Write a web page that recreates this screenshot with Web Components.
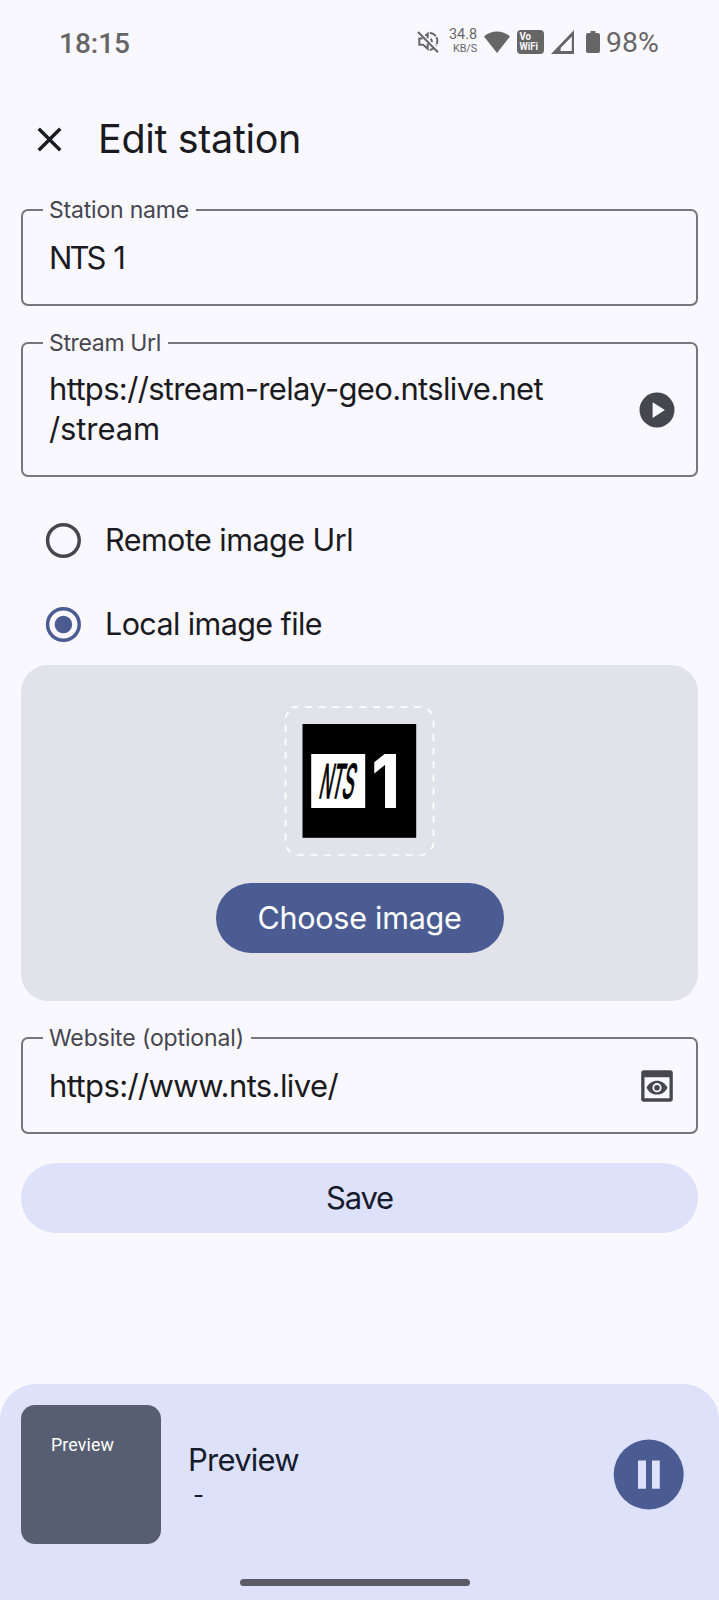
<!DOCTYPE html>
<html lang="en">
<head>
<meta charset="utf-8">
<title>Edit station</title>
<style>
html,body{margin:0;padding:0}
body{width:719px;height:1600px;overflow:hidden;background:#faf8ff;color:#1a1b21;font-family:Inter,Roboto,sans-serif}
</style>
</head>
<body>
<edit-station-page></edit-station-page>
<script>
const define = (name, html, extra) => customElements.define(name, class extends HTMLElement {
  constructor() {
    super();
    const t = document.createElement('template');
    t.innerHTML = html;
    this.attachShadow({ mode: 'open' }).appendChild(t.content.cloneNode(true));
  }
  connectedCallback() { if (extra) extra(this, this.shadowRoot); }
});

/* A single line of text whose tracking is adjusted to a given width. */
define('fit-text', `
<style>:host{display:block;white-space:nowrap;line-height:40px;flex:none}span{display:inline-block}</style>
<span><slot></slot></span>`, (el, root) => {
  const span = root.querySelector('span');
  el.style.fontSize = el.getAttribute('size') + 'px';
  const width = +el.getAttribute('width');
  span.style.letterSpacing = '0px';
  const natural = span.getBoundingClientRect().width;
  span.style.letterSpacing = ((width - natural) / el.textContent.length).toFixed(3) + 'px';
  el.style.width = width + 'px';
});

define('status-bar', `
<style>
:host{display:flex;height:84px;box-sizing:border-box;color:#666;font-family:Roboto,sans-serif;padding-left:59px;align-items:center}
.time{font-weight:500;margin-right:287px;padding-top:3px}
.rate{display:flex;flex-direction:column;align-items:flex-end;margin:0 7px 0 10px;width:28px}
.rate fit-text{line-height:14px}
svg{display:block;flex:none}
.pct{margin-left:6px;padding-top:2px}
</style>
<fit-text class="time" size="28" width="71">18:15</fit-text>
<svg width="22" height="22" viewBox="0 0 22 22" fill="none" stroke="#666" stroke-width="2">
<path d="M1 1 21 21.3"/><path d="M5.5 7.6H2.3v6.2h3.8l4.6 4V12.6M8.3 4.7l2.400-2.100v4.700"/><path d="M13.600 7.800c1 .8 1.500 2 1.300 3.300"/><path d="M12.800 1.800c5 .8 8 4.400 7.500 8.800-.1 1.700-.7 3-1.500 4M16.800 17c-1.200 1-2.400 1.700-4 2" stroke-dasharray="7 1.2"/></svg>
<div class="rate"><fit-text size="14.4" width="28">34.8</fit-text><fit-text size="10.8" width="24">KB/S</fit-text></div>
<svg width="26" height="22" viewBox="0 0 26 22"><path fill="#666" d="M0 5.4C7.5-1.2 18.5-1.2 26 5.4L13 22z"/></svg>
<svg style="margin-left:7px" width="27" height="24" viewBox="0 0 27 24"><rect width="27" height="24" rx="4" fill="#666"/>
<g fill="#faf8ff" font-family="Roboto" font-weight="700" font-size="10"><text x="2.5" y="10" textLength="11.5" lengthAdjust="spacingAndGlyphs">Vo</text><text x="2.5" y="20" textLength="18.5" lengthAdjust="spacingAndGlyphs">WiFi</text></g></svg>
<svg style="margin-left:7px" width="23" height="24" viewBox="0 0 23 24"><path fill="#666" fill-rule="evenodd" d="M23 0V24H0zM20.8 6.5 9.6 18v3h11.2z"/></svg>
<svg style="margin-left:12px" width="14" height="22" viewBox="0 0 14 22"><path fill="#666" d="M4.5 0h5v2H12a2 2 0 0 1 2 2v16a2 2 0 0 1-2 2H2a2 2 0 0 1-2-2V4a2 2 0 0 1 2-2h2.500z"/></svg>
<fit-text class="pct" size="28.4" width="53">98%</fit-text>`);

define('top-bar', `
<style>
:host{display:flex;height:109px;align-items:center;padding-left:29px}
svg{display:block;margin:1px 28px 0 0}
</style>
<svg width="41" height="41" viewBox="0 0 24 24"><path fill="#1a1b21" d="M19 6.410 17.590 5 12 10.590 6.410 5 5 6.410 10.590 12 5 17.590 6.410 19 12 13.410 17.590 19 19 17.590 13.410 12z"/></svg>
<slot></slot>`);

define('outlined-field', `
<style>
:host{display:block;position:relative;box-sizing:border-box;border:2px solid #777680;border-radius:7px}
.label{position:absolute;left:20px;top:-21px;padding:0 7px 0 6px;background:#faf8ff;color:#46464f;height:40px}
.row{display:flex;height:100%;align-items:center;justify-content:space-between;padding:0 18.500px 0 26px}
.value{display:flex;flex-direction:column}
</style>
<div class="label"><slot name="label"></slot></div>
<div class="row"><div class="value"><slot></slot></div><slot name="icon"></slot></div>`);

define('radio-option', `
<style>
:host{display:flex;height:84px;align-items:center;padding-left:45px}
svg{display:block;margin-right:23px}
:host(:not([checked])) .dot{display:none}
circle{stroke:#46464f}
:host([checked]) circle{stroke:#4b5c92}
.dot{fill:#4b5c92}
</style>
<svg width="37" height="37" viewBox="0 0 37 37"><circle cx="18.400" cy="18.500" r="15.800" fill="none" stroke-width="3.500"/><circle class="dot" cx="18.400" cy="18.500" r="8" stroke-width="1.500"/></svg>
<slot></slot>`);

define('pill-button', `
<style>
:host{display:flex;box-sizing:border-box;height:70px;border-radius:35px;align-items:center;justify-content:center;background:#dde1f9;color:#151b2c}
:host([primary]){background:#4b5c92;color:#fff;width:288px}
</style><slot></slot>`);

define('station-logo', `
<style>:host{display:block}svg{display:block}</style>
<svg width="151" height="151" viewBox="284.500 706 151 151">
<path d="M292 707.200H421a13 13 0 0 1 13 13V842a13 13 0 0 1-13 13H299a13 13 0 0 1-13-13V720a13 13 0 0 1 10-12.600" fill="none" stroke="#fff" stroke-width="1.700" stroke-dasharray="6.850 6.750"/>
<rect x="303" y="724" width="113.700" height="113.800"/>
<rect x="311.700" y="754" width="54" height="54" fill="#fff"/>
<text transform="translate(318.500 798) skewX(-12) scale(.46 1)" font-family="Liberation Sans" font-weight="400" stroke="#000" stroke-width="1.500" font-size="49" textLength="74" lengthAdjust="spacingAndGlyphs">NTS</text>
<text transform="translate(372 808) scale(.86 1)" font-family="Inter" font-weight="800" font-size="74" fill="#fff">1</text>
</svg>`);

define('image-picker', `
<style>:host{display:flex;box-sizing:border-box;height:336px;border-radius:27px;background:#e2e2eb;flex-direction:column;align-items:center;padding-top:41px;gap:26px}</style>
<station-logo></station-logo><slot></slot>`);

define('player-bar', `
<style>
:host{display:flex;flex-direction:column;box-sizing:border-box;height:216px;border-radius:36px 36px 0 0;background:#dde1f9;color:#151b2c;padding:21px 0 0 21px}
.row{display:flex;height:139px}
.tile{box-sizing:border-box;width:140px;height:139px;border-radius:14px;background:#585e71;color:#fff;font-family:Roboto,sans-serif;padding:20px 0 0 30px}
.meta{padding:35px 0 0 27px;width:425px;box-sizing:border-box}
.sub{line-height:29px;padding-left:5px}
svg{display:block;margin:34px 0 0 27px}
.home{width:230px;height:7px;border-radius:4px;background:#5b5c65;margin:35px 0 0 219px}
</style>
<div class="row">
<div class="tile"><fit-text size="17.8" width="63">Preview</fit-text></div>
<div class="meta"><fit-text size="31" width="111">Preview</fit-text><fit-text class="sub" size="24" width="11">-</fit-text></div>
<svg width="71" height="71" viewBox="0 0 71 71"><circle cx="35.700" cy="35.500" r="35" fill="#4b5c92"/><path fill="#dde1f9" d="M25 21.500h8v28.200h-8zM39 21.500h7.800v28.200H39z"/></svg>
</div>
<div class="home"></div>`);

define('edit-station-page', `
<style>
:host{display:flex;flex-direction:column;width:719px;height:1600px}
main{display:flex;flex-direction:column;padding:16px 21px 0;flex:1}
outlined-field{flex:none}
.name{height:97px}
.url{height:135px;margin-top:36px}
.radios{margin:21px 0 -1px -21px}
.site{height:97px;margin-top:36px}
.save{margin-top:29px}
.gap{word-spacing:4px}
.url>fit-text:not([slot]){margin-top:-1px;margin-bottom:1px}
svg{display:block}
</style>
<status-bar></status-bar>
<top-bar><fit-text size="39.5" width="203">Edit station</fit-text></top-bar>
<main>
<outlined-field class="name"><fit-text slot="label" size="23" width="140">Station name</fit-text><fit-text class="gap" size="31" width="74">NTS 1</fit-text></outlined-field>
<outlined-field class="url"><fit-text slot="label" size="23" width="112">Stream Url</fit-text>
<fit-text size="31" width="494">https://stream-relay-geo.ntslive.net</fit-text><fit-text size="31" width="111">/stream</fit-text>
<svg slot="icon" width="42" height="42" viewBox="0 0 24 24"><path fill="#46464f" fill-rule="evenodd" d="M12 2a10 10 0 1 0 0 20 10 10 0 0 0 0-20zM9.500 16.500v-9l7 4.500z"/></svg></outlined-field>
<div class="radios"><radio-option><fit-text size="30.5" width="248">Remote image Url</fit-text></radio-option><radio-option checked><fit-text size="30.5" width="217">Local image file</fit-text></radio-option></div>
<image-picker><pill-button primary><fit-text size="30.5" width="204">Choose image</fit-text></pill-button></image-picker>
<outlined-field class="site"><fit-text slot="label" size="23" width="195">Website (optional)</fit-text><fit-text size="31" width="289">https://www.nts.live/</fit-text>
<svg slot="icon" width="42" height="42" viewBox="0 0 42 42"><path fill="#46464f" fill-rule="evenodd" d="M8 5.200h26a2.800 2.800 0 0 1 2.800 2.800v26a2.800 2.800 0 0 1-2.800 2.800H8A2.800 2.800 0 0 1 5.200 34V8A2.800 2.800 0 0 1 8 5.200zM8.500 12.200v21h25v-21zM10.500 22.700C15 13.500 27 13.500 31.500 22.700 27 31.900 15 31.900 10.500 22.700z"/><circle cx="21" cy="22.700" r="3.700" fill="#46464f" stroke="#faf8ff" stroke-width="1.800"/></svg></outlined-field>
<pill-button class="save"><fit-text size="31" width="67">Save</fit-text></pill-button>
</main>
<player-bar></player-bar>`);
</script>
</body>
</html>
